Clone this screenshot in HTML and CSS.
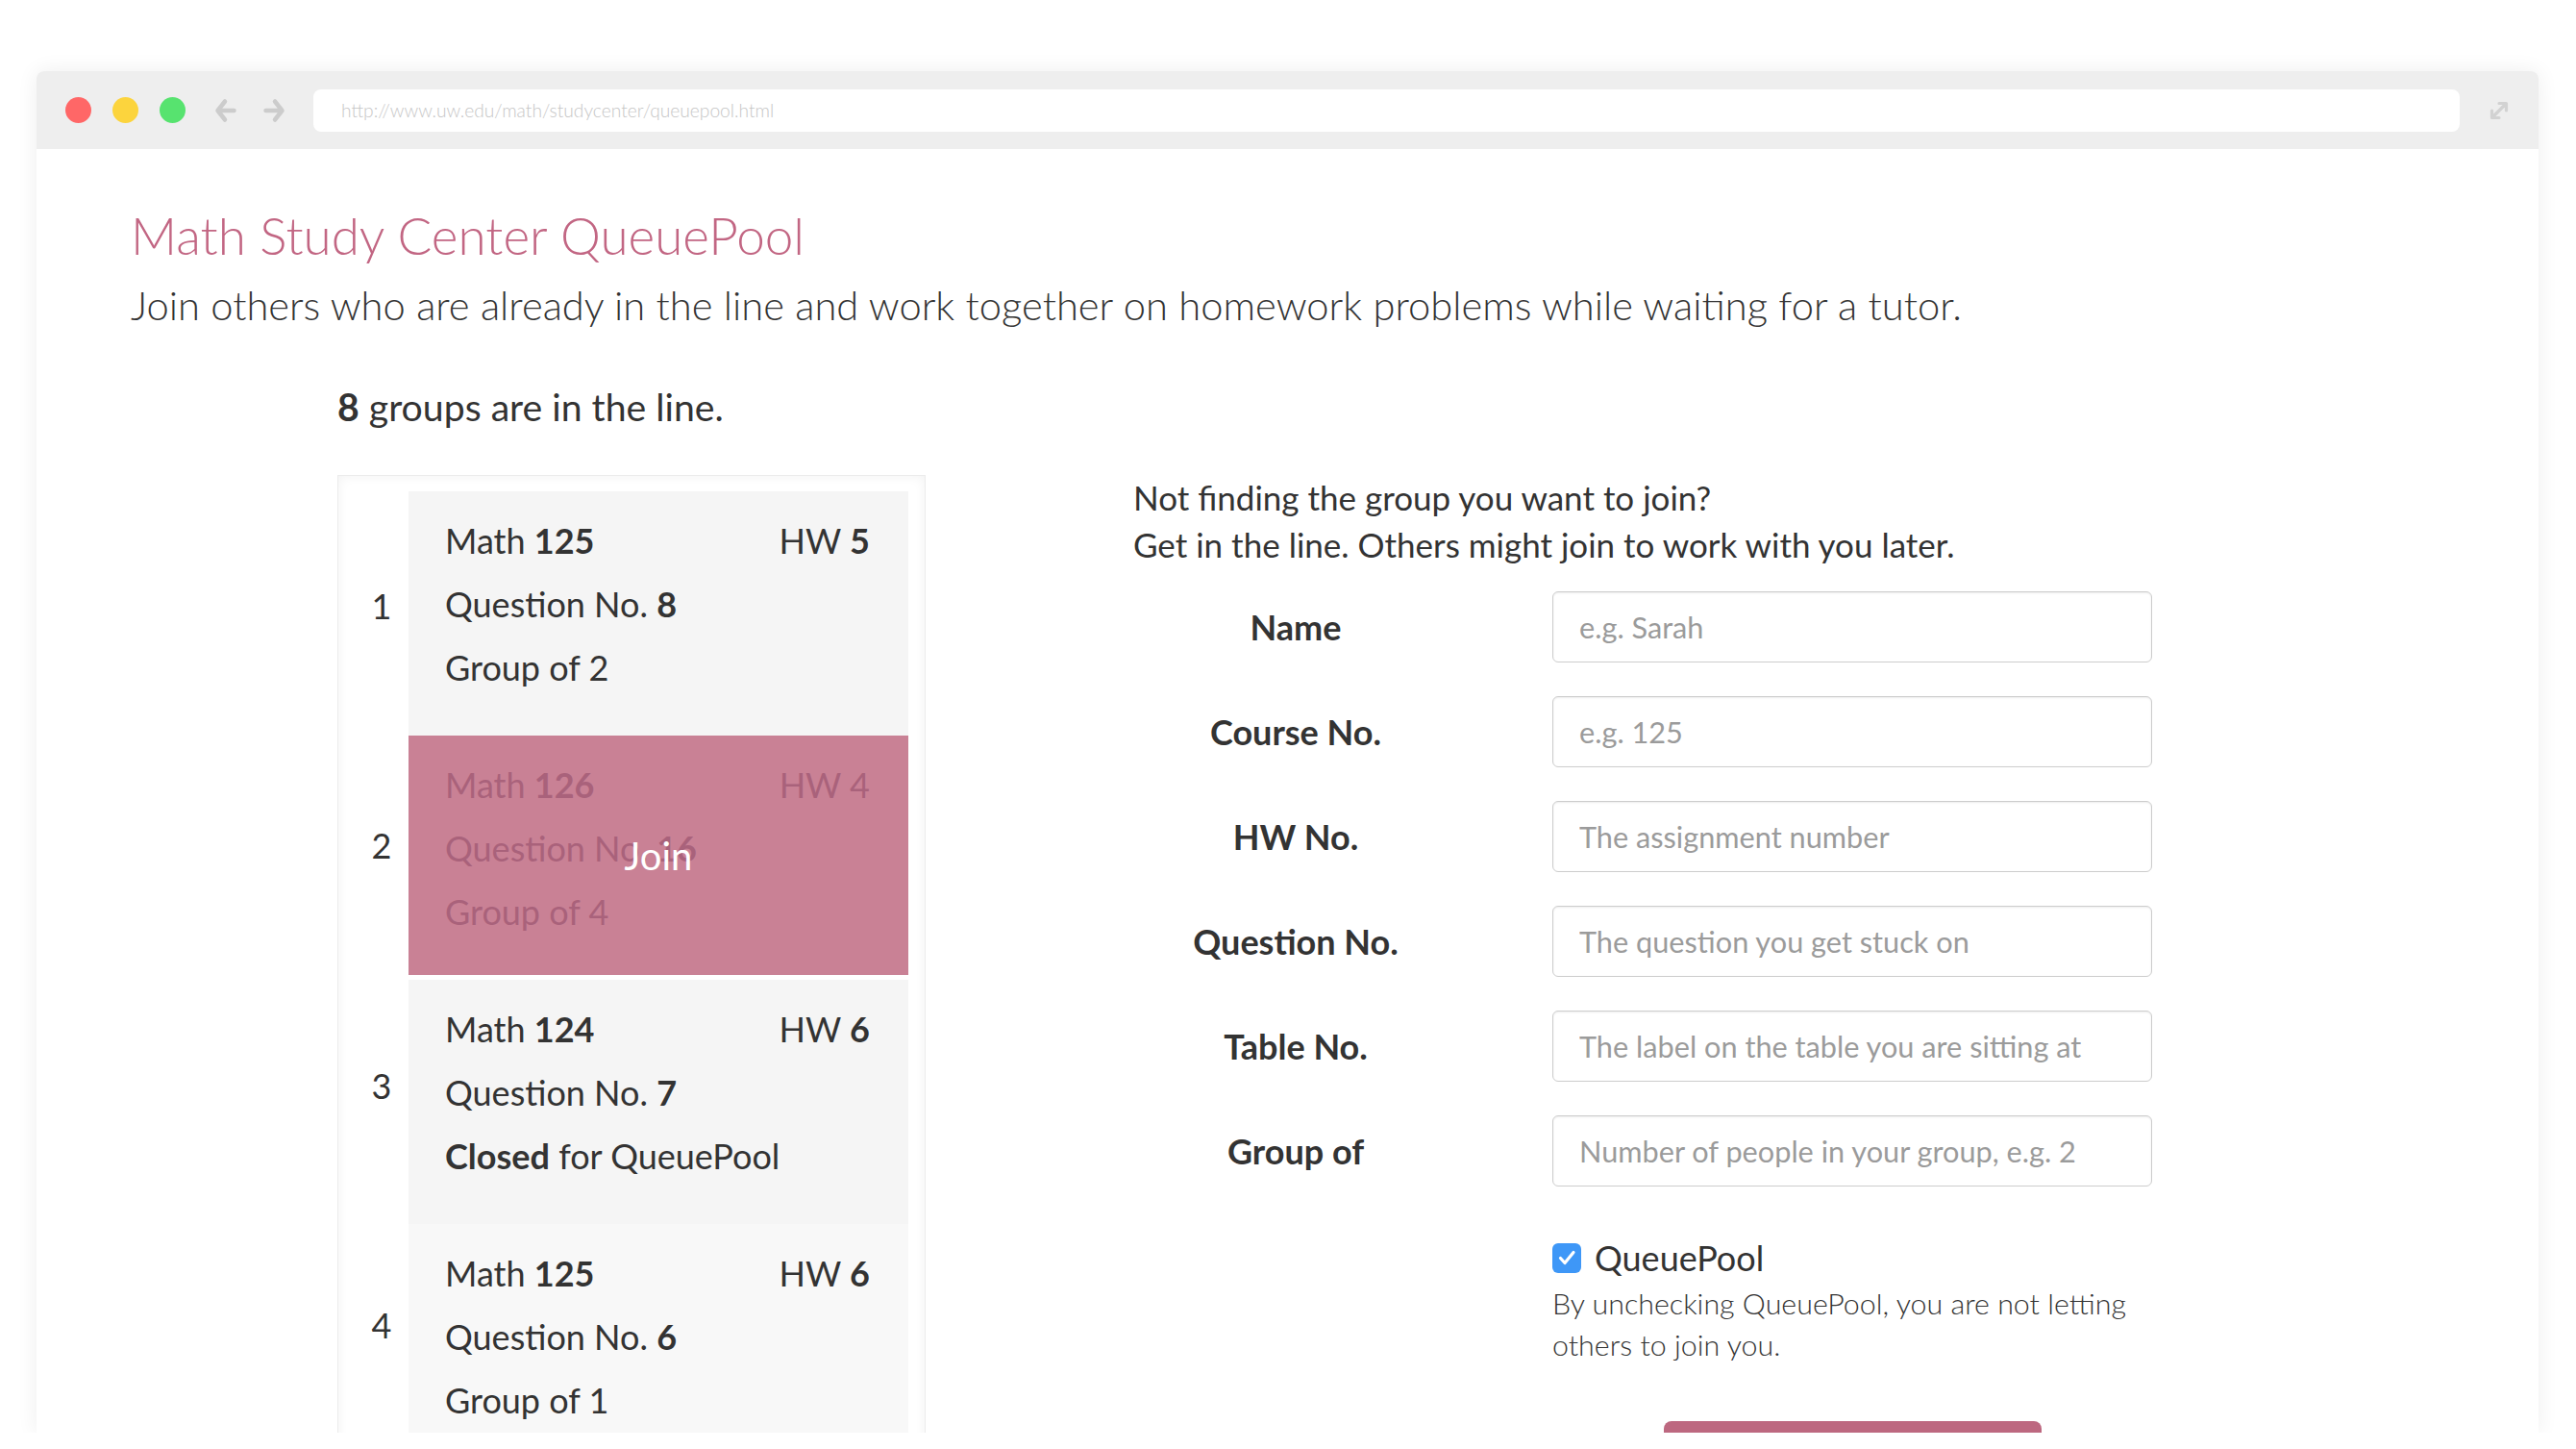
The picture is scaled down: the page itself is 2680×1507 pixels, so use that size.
FILE: index.html
```html
<!DOCTYPE html>
<html lang="en">
<head>
<meta charset="utf-8">
<title>Math Study Center QueuePool</title>
<link rel="stylesheet" href="styles.css">
</head>
<body>
<div class="window">
  <div class="toolbar">
    <span class="light red"></span>
    <span class="light yellow"></span>
    <span class="light green"></span>
    <svg class="nav back" viewBox="0 0 26 26"><path d="M12 3.5 L4.5 13 L12 22.5 M4.5 13 H21.5" fill="none" stroke="#cccccc" stroke-width="4.5" stroke-linecap="round" stroke-linejoin="round"/></svg>
    <svg class="nav fwd" viewBox="0 0 26 26"><path d="M14 3.5 L21.5 13 L14 22.5 M21.5 13 H4.5" fill="none" stroke="#cccccc" stroke-width="4.5" stroke-linecap="round" stroke-linejoin="round"/></svg>
    <div class="url">http://www.uw.edu/math/studycenter/queuepool.html</div>
    <svg class="expand" viewBox="0 0 24 24"><path d="M5 19 L19 5 M12 4.5 H19.5 V12 M4.5 12 V19.5 H12" fill="none" stroke="#d2d2d2" stroke-width="3.2" stroke-linecap="round" stroke-linejoin="round"/></svg>
  </div>
  <div class="content">
    <h1 class="title">Math Study Center QueuePool</h1>
    <p class="subtitle">Join others who are already in the line and work together on homework problems while waiting for a tutor.</p>
    <div class="main">
      <section class="queue">
        <h2 class="count"><b>8</b> groups are in the line.</h2>
        <div class="list">
          <div class="nums">
            <div class="num">1</div>
            <div class="num">2</div>
            <div class="num">3</div>
            <div class="num">4</div>
          </div>
          <div class="items">
            <div class="item">
              <div class="line"><span>Math <b>125</b></span><span>HW <b>5</b></span></div>
              <div class="line"><span>Question No. <b>8</b></span></div>
              <div class="line"><span>Group of 2</span></div>
            </div>
            <div class="item active">
              <div class="line"><span>Math <b>126</b></span><span>HW 4</span></div>
              <div class="line"><span>Question No. <b>16</b></span></div>
              <div class="line"><span>Group of 4</span></div>
              <div class="join-overlay">Join</div>
            </div>
            <div class="item">
              <div class="line"><span>Math <b>124</b></span><span>HW <b>6</b></span></div>
              <div class="line"><span>Question No. <b>7</b></span></div>
              <div class="line"><span><b>Closed</b> for QueuePool</span></div>
            </div>
            <div class="item faint">
              <div class="line"><span>Math <b>125</b></span><span>HW <b>6</b></span></div>
              <div class="line"><span>Question No. <b>6</b></span></div>
              <div class="line"><span>Group of 1</span></div>
            </div>
          </div>
        </div>
      </section>
      <section class="join">
        <p class="prompt">Not finding the group you want to join?<br>Get in the line. Others might join to work with you later.</p>
        <form class="form">
          <label class="lbl" for="f-name">Name</label>
          <input class="field" id="f-name" type="text" placeholder="e.g. Sarah">
          <label class="lbl" for="f-course">Course No.</label>
          <input class="field" id="f-course" type="text" placeholder="e.g. 125">
          <label class="lbl" for="f-hw">HW No.</label>
          <input class="field" id="f-hw" type="text" placeholder="The assignment number">
          <label class="lbl" for="f-q">Question No.</label>
          <input class="field" id="f-q" type="text" placeholder="The question you get stuck on">
          <label class="lbl" for="f-table">Table No.</label>
          <input class="field" id="f-table" type="text" placeholder="The label on the table you are sitting at">
          <label class="lbl" for="f-group">Group of</label>
          <input class="field" id="f-group" type="text" placeholder="Number of people in your group, e.g. 2">
          <div class="pool">
            <div class="check-row">
              <span class="checkbox"><svg viewBox="0 0 30 30"><path d="M8.5 15.5 L13 20.5 L22 9.5" fill="none" stroke="#ffffff" stroke-width="3.2" stroke-linecap="round" stroke-linejoin="round"/></svg></span>
              <span class="check-label">QueuePool</span>
            </div>
            <p class="note">By unchecking QueuePool, you are not letting others to join you.</p>
            <button class="submit" type="button" aria-label="Get in the line"></button>
          </div>
        </form>
      </section>
    </div>
  </div>
</div>
</body>
</html>
```
FILE: styles.css
```css
* { box-sizing: border-box; }

html, body {
  margin: 0;
  background: #ffffff;
}

body {
  font-family: Lato, "Open Sans", "Liberation Sans", sans-serif;
  color: #333333;
}

.window {
  margin: 74px 0 0 38px;
  width: 2603px;
  height: 1416px;
  border-radius: 8px 8px 0 0;
  overflow: hidden;
  background: #ffffff;
  box-shadow: 0 0 22px rgba(0, 0, 0, 0.07);
}

/* browser chrome */
.toolbar {
  height: 81px;
  background: #eeeeee;
  display: flex;
  align-items: center;
  padding: 0 29px 0 30px;
}

.light {
  width: 27px;
  height: 27px;
  border-radius: 50%;
  margin-right: 22px;
  flex: none;
}
.light.red { background: #ff6767; }
.light.yellow { background: #fcd43d; }
.light.green { background: #57e36f; margin-right: 29px; }

.nav { width: 26px; height: 26px; flex: none; }
.nav.back { margin-right: 24px; }
.nav.fwd { margin-right: 28px; }

.url {
  flex: 1;
  height: 44px;
  background: #ffffff;
  border-radius: 8px;
  padding-left: 29px;
  display: flex;
  align-items: center;
  font-size: 19.2px;
  font-weight: 300;
  color: #c6c6c6;
}

.expand { width: 24px; height: 24px; margin-left: 29px; flex: none; }

/* page */
.content {
  padding: 58px 0 0 98px;
}

.title {
  margin: 0;
  font-weight: 300;
  font-size: 53px;
  line-height: 64px;
  color: #c26683;
}

.subtitle {
  margin: 16px 0 0;
  font-weight: 300;
  font-size: 41.7px;
  line-height: 48px;
  color: #333333;
}

.main {
  display: flex;
  align-items: flex-start;
  margin: 58px 0 0 215px;
}

.queue { width: 612px; flex: none; }

.count {
  margin: 0 0 47px;
  font-size: 39.2px;
  line-height: 48px;
  font-weight: 400;
}

.list {
  display: flex;
  border: 1px solid #ececec;
  box-shadow: inset 0 0 12px rgba(0, 0, 0, 0.06);
  padding-right: 17px;
  height: 1200px;
}

.nums {
  width: 73px;
  flex: none;
  padding: 10px 0 0 17px;
}

.num {
  height: 249.5px;
  display: flex;
  align-items: center;
  justify-content: center;
  font-size: 36px;
}

.items {
  width: 520px;
  flex: none;
  padding-top: 16px;
}

.item {
  position: relative;
  height: 254px;
  padding: 18px 40px 0 38px;
  background: #f5f5f5;
}

.item.active {
  height: 249px;
  margin-bottom: 5px;
  background: #c98195;
  color: #a9627b;
}

.item.faint { background: #f8f8f8; }

.line {
  display: flex;
  justify-content: space-between;
  font-size: 36px;
  line-height: 66px;
}

.line b { font-weight: 700; }

.join-overlay {
  position: absolute;
  inset: 0;
  display: flex;
  align-items: center;
  justify-content: center;
  font-size: 40px;
  color: #ffffff;
}

/* form side */
.join {
  margin-left: 216px;
  flex: none;
}

.prompt {
  margin: 94px 0 0;
  font-size: 35px;
  line-height: 49px;
}

.form {
  display: grid;
  grid-template-columns: 338px 624px;
  column-gap: 98px;
  row-gap: 35px;
  margin-top: 24px;
}

.lbl {
  align-self: center;
  text-align: center;
  font-weight: 700;
  font-size: 36px;
  line-height: 44px;
}

.field {
  height: 74px;
  width: 100%;
  border: 1px solid #cdcdcd;
  border-radius: 6px;
  padding: 0 27px;
  font-family: Lato, "Open Sans", sans-serif;
  font-size: 30.7px;
  color: #333333;
  background: #ffffff;
  box-shadow: inset 0 1px 2px rgba(0, 0, 0, 0.08);
  outline: none;
}

.field::placeholder { color: #9b9b9b; opacity: 1; }

.pool { grid-column: 2; }

.check-row {
  display: flex;
  align-items: center;
  height: 30px;
  margin-top: 24px;
}

.checkbox {
  width: 30px;
  height: 31px;
  border-radius: 6px;
  background: #3e97f7;
  margin-right: 14px;
  display: flex;
  flex: none;
}
.checkbox svg { width: 30px; height: 30px; }

.check-label {
  font-size: 36px;
  line-height: 30px;
}

.note {
  margin: 11px 0 0;
  font-weight: 300;
  font-size: 30.4px;
  line-height: 43px;
}

.submit {
  display: block;
  width: 393px;
  height: 74px;
  margin: 58px auto 0;
  border: 0;
  border-radius: 8px;
  background: #bd6880;
}
```
